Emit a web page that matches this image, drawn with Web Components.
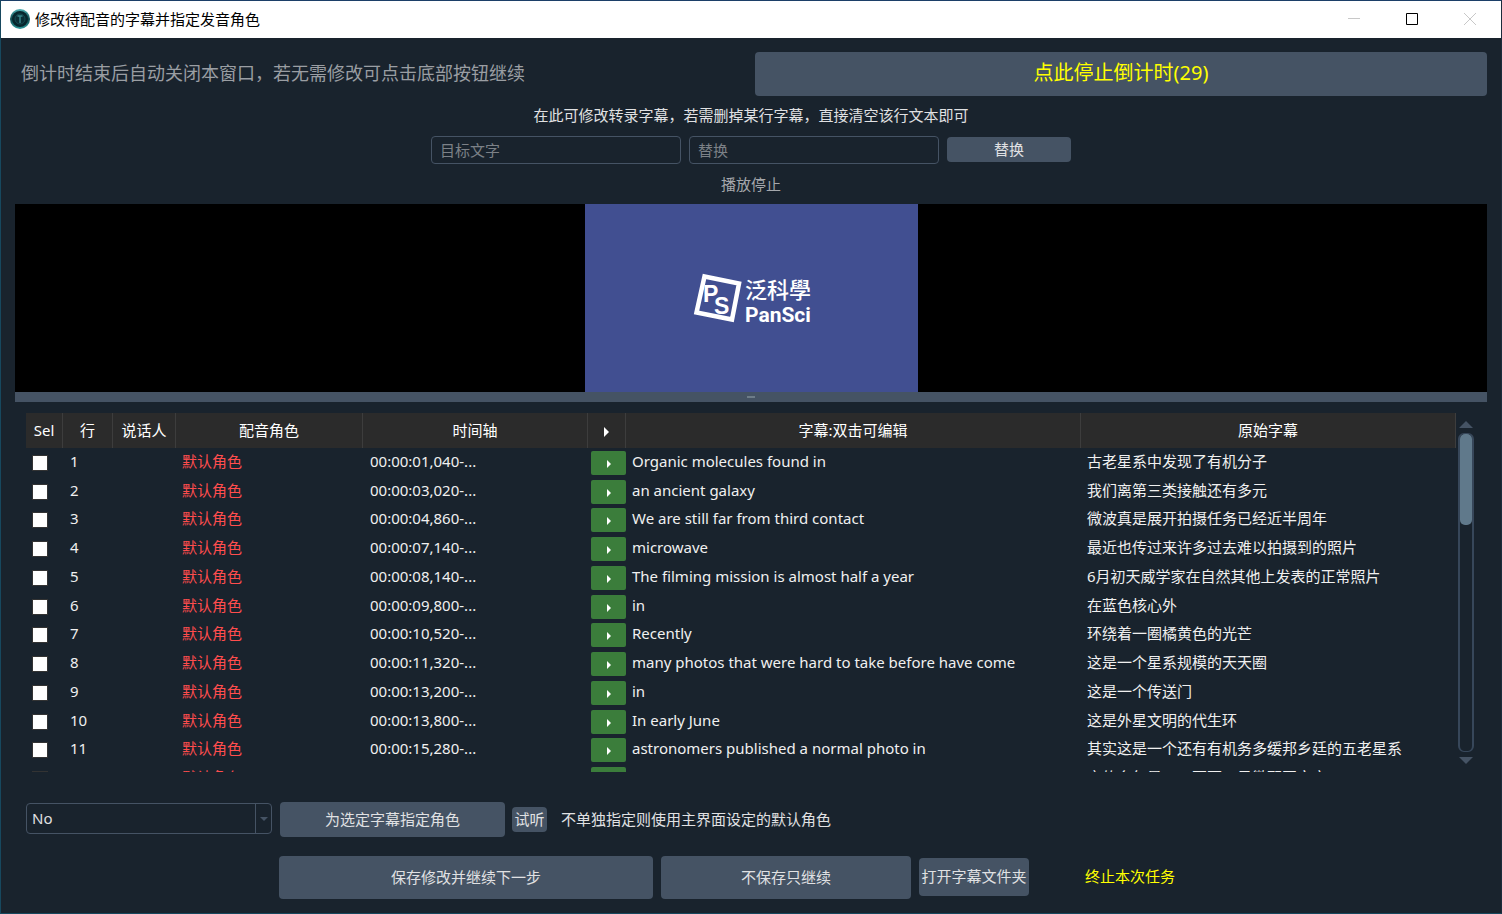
<!DOCTYPE html>
<html lang="zh-CN">
<head>
<meta charset="utf-8">
<title>修改待配音的字幕并指定发音角色</title>
<style>
  html, body { margin: 0; height: 100%; background: #19232d; }
  body {
    font: 15px/20px "Noto Sans", "Noto Sans CJK SC", sans-serif;
    color: #e0e1e3;
  }
</style>
</head>
<body>
<app-window>
  <title-bar slot="title">修改待配音的字幕并指定发音角色</title-bar>
  <countdown-row></countdown-row>
  <hint-line>在此可修改转录字幕，若需删掉某行字幕，直接清空该行文本即可</hint-line>
  <replace-bar></replace-bar>
  <hint-line class="muted">播放停止</hint-line>
  <video-preview></video-preview>
  <subtitle-pane></subtitle-pane>
  <role-bar></role-bar>
  <action-bar></action-bar>
</app-window>

<script>
const define = (name, html, setup) => {
  const template = document.createElement('template');
  template.innerHTML = html;
  customElements.define(name, class extends HTMLElement {
    constructor() {
      super();
      this.attachShadow({ mode: 'open' }).append(template.content.cloneNode(true));
      if (setup) setup(this.shadowRoot, this);
    }
  });
};

define('push-button', `
  <style>
    :host { display: block; }
    button {
      display: block; width: 100%; height: 100%; box-sizing: border-box; margin: 0; padding: 0 0 2px;
      border: 0; border-radius: 4px; background: #455364; color: inherit;
      font: inherit; white-space: nowrap;
    }
    :host([flat]) button { background: transparent; }
  </style>
  <button type="button"><slot></slot></button>`);

define('text-field', `
  <style>
    :host { display: block; }
    input {
      display: block; width: 100%; height: 28px; box-sizing: border-box; margin: 0; padding: 0 8px;
      border: 1px solid #455364; border-radius: 4px; background: #19232d;
      color: inherit; font: inherit; outline: 0;
    }
    input::placeholder { color: #7c8187; opacity: 1; }
  </style>
  <input type="text">`, (root, host) => {
    const input = root.querySelector('input');
    input.placeholder = host.getAttribute('hint');
    input.setAttribute('aria-label', host.getAttribute('hint'));
  });

define('app-window', `
  <style>
    :host {
      display: flex; flex-direction: column; height: 100vh; min-height: 640px; box-sizing: border-box;
      border: 1px solid #17485e; border-top-color: #1c3f68; border-right-color: #1b2c3c; background: #19232d;
    }
    main {
      flex: 1; min-height: 0; display: flex; flex-direction: column; gap: 10px;
      padding: 14px;
    }
  </style>
  <slot name="title"></slot>
  <main><slot></slot></main>`);

define('title-bar', `
  <style>
    :host {
      display: flex; align-items: center; height: 37px; flex: none; box-sizing: border-box;
      padding: 0 2px 2px 9px; background: #fff; color: #000;
    }
    .logo { width: 20px; height: 20px; margin-right: 5px; }
    h1 { flex: 1; margin: 0; font: inherit; }
    button {
      width: 58px; height: 34px; padding: 0; border: 0; background: none;
      display: grid; place-items: center;
    }
    button svg { width: 12px; height: 12px; display: block; fill: none; stroke: #c8c8c8; }
    button.on svg { stroke: #000; }
  </style>
  <svg class="logo" viewBox="0 0 20 20" aria-hidden="true">
    <defs><linearGradient id="ring" x1="0" y1="0" x2="0" y2="1">
      <stop offset="0" stop-color="#4fb0b3"/><stop offset=".5" stop-color="#0d4a50"/><stop offset="1" stop-color="#2f9a9c"/>
    </linearGradient></defs>
    <circle cx="10" cy="10" r="10" fill="url(#ring)"/>
    <circle cx="10" cy="10" r="8" fill="#06262d"/>
    <circle cx="10" cy="10" r="5" fill="#092d35" stroke="#154b53"/>
    <path d="M7.500 7h5M10 7v7" stroke="#37868b" stroke-width="1.500" fill="none"/>
  </svg>
  <h1><slot></slot></h1>
  <button type="button" aria-label="最小化"><svg viewBox="0 0 12 12"><path d="M0 5.500h12"/></svg></button>
  <button type="button" class="on" aria-label="最大化"><svg viewBox="0 0 12 12"><path d="M.5.5h11v11H.5z"/></svg></button>
  <button type="button" aria-label="关闭"><svg viewBox="0 0 12 12"><path d="M0 0l12 12M12 0L0 12"/></svg></button>`);

define('countdown-row', `
  <style>
    :host { display: grid; grid-template-columns: 1fr 1fr; gap: 8px; align-items: center; flex: none; }
    span { padding: 0 0 2px 6px; font-size: 18px; color: #9a9ea3; white-space: nowrap; }
    push-button { height: 44px; font-size: 20px; color: #ffff00; }
  </style>
  <span>倒计时结束后自动关闭本窗口，若无需修改可点击底部按钮继续</span>
  <push-button>点此停止倒计时(29)</push-button>`);

define('hint-line', `
  <style>
    :host { display: block; flex: none; height: 20px; line-height: 18px; text-align: center; }
    :host(.muted) { line-height: 20px; color: #a5a8ac; }
  </style>
  <slot></slot>`);

define('replace-bar', `
  <style>
    :host { display: flex; justify-content: center; gap: 8px; flex: none; }
    text-field { width: 250px; }
    push-button { width: 124px; height: 25px; margin-top: 1px; }
  </style>
  <text-field hint="目标文字"></text-field>
  <text-field hint="替换"></text-field>
  <push-button>替换</push-button>`);

define('video-preview', `
  <style>
    :host { display: block; flex: none; }
    .stage { background: #000; height: 188px; }
    .stage svg { display: block; width: 333px; height: 188px; margin: 0 auto; background: #414f91; }
    .grip { height: 10px; background: #455364; display: grid; place-items: center; }
    .grip i { width: 8px; height: 2px; background: #6d7c88; }
  </style>
  <div class="stage">
    <svg viewBox="0 0 333 188" role="img" aria-label="PanSci 泛科學">
      <path d="M119.500 72.500L154 79.500L147 115.500L111.500 108.500Z" fill="none" stroke="#fff" stroke-width="4.500"/>
      <g fill="#fff">
        <text x="118" y="98" font-family="Liberation Sans" font-weight="700" font-size="23">P<tspan x="129" y="110">S</tspan></text>
        <text x="160" y="94" font-family="Noto Sans CJK TC" font-weight="500" font-size="22">泛科學</text>
        <text x="160" y="118" font-family="Roboto" font-weight="700" font-size="21">PanSci</text>
      </g>
    </svg>
  </div>
  <div class="grip"><i></i></div>`);

define('scroll-rail', `
  <style>
    :host { display: flex; flex-direction: column; align-items: center; width: 16px; box-sizing: border-box; padding: 8px 0; }
    svg { width: 14px; height: 7px; fill: #455364; flex: none; }
    .rail {
      flex: 1; width: 16px; box-sizing: border-box; margin: 5px 0; border: 2px solid #37475a; border-width: 1px 2px;
      border-radius: 6px;
    }
    .thumb { height: 91px; border-radius: 5px; background: #60798b; }
  </style>
  <svg viewBox="0 0 14 7"><path d="M7 0l7 7H0z"/></svg>
  <div class="rail"><div class="thumb"></div></div>
  <svg viewBox="0 0 14 7"><path d="M7 7l7-7H0z"/></svg>`);

const rows = [
  ['00:00:01,040-...', 'Organic molecules found in', '古老星系中发现了有机分子'],
  ['00:00:03,020-...', 'an ancient galaxy', '我们离第三类接触还有多元'],
  ['00:00:04,860-...', 'We are still far from third contact', '微波真是展开拍摄任务已经近半周年'],
  ['00:00:07,140-...', 'microwave', '最近也传过来许多过去难以拍摄到的照片'],
  ['00:00:08,140-...', 'The filming mission is almost half a year', '6月初天威学家在自然其他上发表的正常照片'],
  ['00:00:09,800-...', 'in', '在蓝色核心外'],
  ['00:00:10,520-...', 'Recently', '环绕着一圈橘黄色的光芒'],
  ['00:00:11,320-...', 'many photos that were hard to take before have come', '这是一个星系规模的天天圈'],
  ['00:00:13,200-...', 'in', '这是一个传送门'],
  ['00:00:13,800-...', 'In early June', '这是外星文明的代生环'],
  ['00:00:15,280-...', 'astronomers published a normal photo in', '其实这是一个还有有机务多缓邦乡廷的五老星系'],
  ['00:00:17,960-...', 'a space', '它的多年是一一百万一星微配图文字']
];

define('subtitle-table', `
  <style>
    :host { display: block; overflow: hidden; }
    table { width: 100%; height: 380px; table-layout: fixed; border-collapse: separate; border-spacing: 0; color: #fff; }
    th {
      height: 35px; box-sizing: border-box; padding: 0 0 2px; font-weight: 400; text-align: center;
      background: #2b2b2b; border-right: 1px solid #3d3d3d;
    }
    td { padding: 0 0 3px 7px; white-space: nowrap; overflow: hidden; vertical-align: middle; color: #f0f0f0; }
    td.role, td.line { padding-left: 6px; }
    td.role { color: #ff4d4d; }
    td.pick { padding: 1px 0 0 6px; }
    td.play { padding: 1px 0 0 3px; }
    input {
      appearance: none; display: block; width: 16px; height: 16px; box-sizing: border-box; margin: 0;
      border: 1px solid #333; background: #fff;
    }
    button {
      display: grid; place-items: center; width: 35px; height: 24px; margin: 0; padding: 2px 0 0;
      border: 0; border-radius: 2px; background: #3b7d3b; box-sizing: border-box;
    }
    svg { display: block; width: 4px; height: 8px; fill: #fff; }
    th svg { width: 5px; height: 10px; margin: 5px auto 0; }
  </style>
  <table>
    <colgroup>
      <col style="width:37px"><col style="width:50px"><col style="width:63px"><col style="width:187px">
      <col style="width:225px"><col style="width:38px"><col><col style="width:375px">
    </colgroup>
    <thead><tr>
      <th>Sel</th><th>行</th><th>说话人</th><th>配音角色</th><th>时间轴</th>
      <th aria-label="播放"><svg viewBox="0 0 5 10"><path d="M0 0l5 5l-5 5z"/></svg></th>
      <th>字幕:双击可编辑</th><th>原始字幕</th>
    </tr></thead>
    <tbody></tbody>
  </table>`, root => {
    root.querySelector('tbody').innerHTML = rows.map(([time, text, source], i) => `
      <tr>
        <td class="pick"><input type="checkbox" aria-label="选择第 ${i + 1} 行"></td>
        <td>${i + 1}</td><td></td><td class="role">默认角色</td><td>${time}</td>
        <td class="play"><button type="button" aria-label="播放第 ${i + 1} 行"><svg viewBox="0 0 4 8"><path d="M0 0l4 4l-4 4z"/></svg></button></td>
        <td class="line">${text}</td><td class="line">${source}</td>
      </tr>`).join('');
  });

define('subtitle-pane', `
  <style>
    :host { display: flex; flex: 1; min-height: 0; gap: 2px; margin: 1px 13px 20px 11px; }
    subtitle-table { flex: 1; min-width: 0; }
  </style>
  <subtitle-table></subtitle-table>
  <scroll-rail></scroll-rail>`);

define('role-select', `
  <style>
    :host { display: flex; position: relative; height: 31px; }
    select {
      appearance: none; flex: 1; box-sizing: border-box; margin: 0; padding: 0 24px 2px 5px;
      border: 1px solid #455364; border-radius: 4px; background: #19232d;
      color: inherit; font: inherit;
    }
    .drop {
      position: absolute; top: 1px; right: 1px; bottom: 1px; width: 15px; border-left: 1px solid #455364;
      display: grid; place-items: center; pointer-events: none;
    }
    svg { width: 8px; height: 4px; fill: #455364; }
  </style>
  <select aria-label="配音角色"><option>No</option></select>
  <span class="drop"><svg viewBox="0 0 8 4"><path d="M0 0h8l-4 4z"/></svg></span>`);

define('role-bar', `
  <style>
    :host { display: flex; align-items: center; flex: none; margin: 0 0 9px 11px; }
    role-select { width: 246px; margin: 0 8px 2px 0; }
    .assign { width: 225px; height: 35px; margin-right: 7px; }
    .listen { width: 35px; height: 25px; margin-right: 14px; }
    span { padding-bottom: 2px; }
  </style>
  <role-select></role-select>
  <push-button class="assign">为选定字幕指定角色</push-button>
  <push-button class="listen">试听</push-button>
  <span>不单独指定则使用主界面设定的默认角色</span>`);

define('action-bar', `
  <style>
    :host { display: flex; justify-content: center; align-items: center; gap: 8px; flex: none; height: 43px; }
    .save { width: 374px; height: 43px; }
    .skip { width: 250px; height: 43px; }
    .open, .stop { height: 38px; margin-bottom: 2px; }
    .open { width: 110px; }
    .stop { width: 186px; color: #ffff00; }
  </style>
  <push-button class="save">保存修改并继续下一步</push-button>
  <push-button class="skip">不保存只继续</push-button>
  <push-button class="open">打开字幕文件夹</push-button>
  <push-button class="stop" flat>终止本次任务</push-button>`);
</script>
</body>
</html>
